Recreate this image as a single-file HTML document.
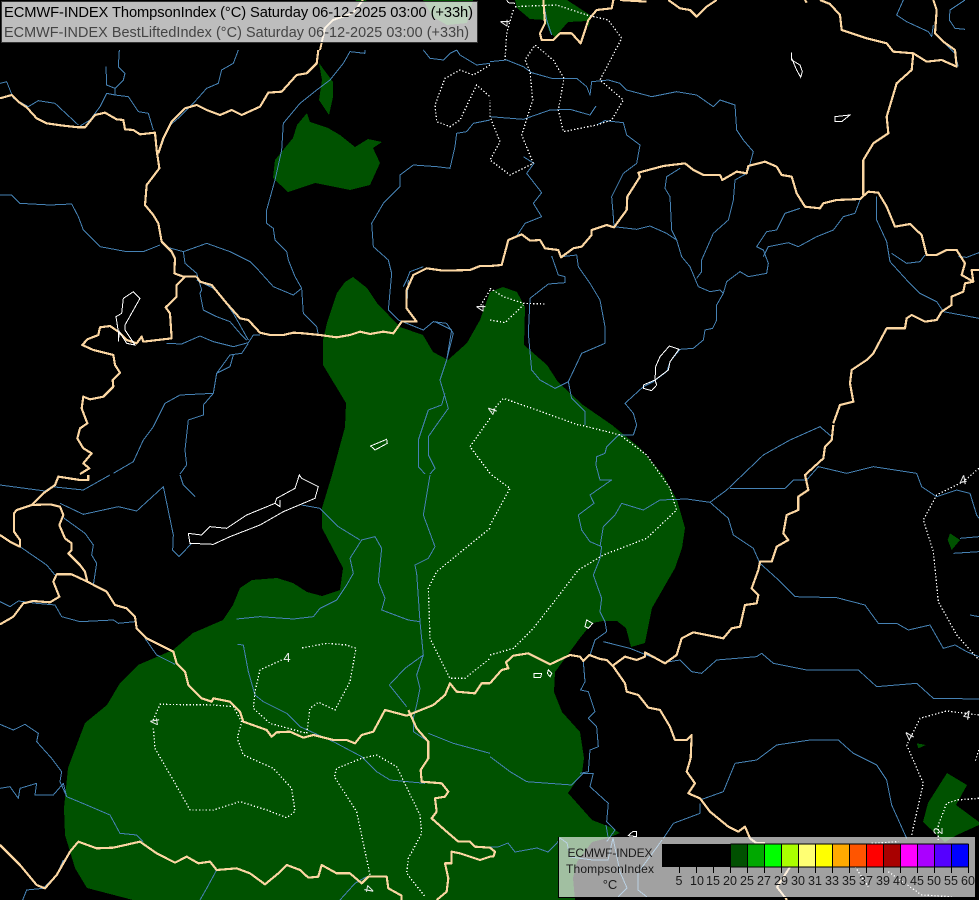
<!DOCTYPE html>
<html><head><meta charset="utf-8"><style>
html,body{margin:0;padding:0;background:#000;width:979px;height:900px;overflow:hidden}
svg{display:block;font-family:"Liberation Sans",sans-serif}
.g{fill:#005200;stroke:none}
.r path{fill:none;stroke:#4682b4;stroke-width:3;stroke-linejoin:round}
.b path{fill:none;stroke:#fbd6a2;stroke-width:6.5;stroke-linejoin:round}
.l path{fill:none;stroke:#fff;stroke-width:3}
.d path{fill:none;stroke:#fff;stroke-width:4;stroke-dasharray:4 6}
</style></head><body>
<svg width="979" height="900" viewBox="0 0 979 900" xmlns="http://www.w3.org/2000/svg">
<rect width="979" height="900" fill="#000"/>
<g shape-rendering="crispEdges">
<path class="g" d="M353,277 367,288 377,303 400,327 423,335 433,352 448,360 467,343 480,320 490,292 503,287 517,292 525,307 524,345 547,365 558,382 583,405 612,425 640,448 663,475 677,500 685,528 682,548 675,568 652,608 645,643 631,647 626,628 617,621 603,621 592,623 580,638 555,672 554,692 562,712 580,732 584,758 582,773 568,793 592,820 610,827 620,833 608,838 592,842 577,862 573,878 575,900 133,900 87,888 75,868 65,835 64,808 68,768 85,723 107,705 120,683 138,665 173,650 193,633 223,620 233,605 240,588 252,580 277,578 293,583 307,592 322,596 340,590 343,568 322,528 322,508 332,475 345,427 346,403 323,365 323,340 327,323 337,293 345,282Z"/>
<path class="g" d="M319,63 333,82 333,97 329,115 319,100 322,80Z"/>
<path class="g" d="M307,113 310,122 328,128 340,135 355,147 368,139 382,142 373,148 380,163 370,185 350,190 315,183 288,192 273,178 275,160 293,138 297,125Z"/>
<path class="g" d="M515,0 517,8 530,19 545,20 550,33 555,37 568,22 587,21 589,28 590,15 567,0Z"/>
<path class="g" d="M423,0 433,17 447,25 467,23 473,0Z M355,0 367,0 363,3 358,3Z"/>
<path class="g" d="M947,773 967,785 956,805 979,822 979,825 957,835 945,842 937,835 923,822 928,803Z"/>
<g transform="translate(490,425) scale(.33333)">
<path class="g" d="M1380,325 1410,345 1385,375 1373,345Z"/>
<path class="g" d="M1280,955 1308,960 1285,970Z"/>
</g>

<!-- rivers -->
<g class="r">
<g transform="translate(0,50) scale(.33333)">
<path d="M358,0 355,50 375,70 370,90 345,115 320,105 318,50"/>
<path d="M345,115 345,135 320,130 300,170 270,210 240,228"/>
<path d="M0,100 20,95 40,145 85,170 115,152 165,160 235,225"/>
<path d="M345,135 385,140 415,185 445,190 460,240"/>
<path d="M715,0 700,40 665,60 655,100 620,115 580,160 540,200 505,230 480,300"/>
<path d="M0,435 35,435 60,460 150,465 215,462 235,500 250,540 300,590 380,605 430,605 480,585"/>
<path d="M495,590 550,605 620,580 690,605 750,635 775,660 820,710 880,735 905,715 910,790 950,830 955,855"/>
<path d="M905,715 885,680 865,630 860,605 825,570 820,535 800,520 800,480 825,390 845,300 850,220 900,160 950,120 990,90 1030,40 1050,5 1095,10 1095,0"/>
<path d="M550,605 555,640 590,670 605,720 600,730 610,780 650,800 690,815 720,850 740,870"/>
<path d="M590,690 650,720 700,790 745,870"/>
<path d="M500,880 545,882 600,858 640,875 700,890 745,878 760,855 780,855"/>
<path d="M745,880 725,910 690,915 650,970 640,1030 540,1035 495,1060 460,1130 430,1170 400,1235 340,1270"/>
<path d="M650,970 690,950 700,915"/>
<path d="M640,1030 610,1065 610,1095 565,1110 555,1200 560,1245 540,1272"/>
<path d="M1470,40 1430,45 1380,15 1370,0 M1270,0 1290,25 1330,30 1350,10 1370,0"/>
<path d="M1470,210 1420,220 1400,245 1370,250 1365,290 1350,355 1310,350 1240,345 1200,375 1200,410 1150,460 1115,520 1120,590 1165,630 1175,670 1165,780 1195,810 1270,840 1300,815 1340,820 1360,850 1340,930 1320,990 1335,1040 1345,1075 1320,1110 1285,1160 1285,1215 1305,1255 1290,1272"/>
<path d="M1335,1030 1325,1065 1285,1080 1255,1170 1255,1250 1275,1272"/>
<path d="M1225,690 1220,775 M1210,710 1220,690 1230,665 1270,650"/>
<path d="M1305,815 1355,840 1340,930"/>
</g>
<g transform="translate(490,0) scale(.33333)">
<path d="M0,185 50,180 100,200 125,218 185,235 260,235 290,260 300,285 305,245 355,240 390,250 410,270 485,290 560,275 620,285 670,320 690,300 735,315 740,390 760,420 790,455 775,510"/>
<path d="M770,520 735,540 730,600 715,660 670,700 635,780 635,815 620,835"/>
<path d="M0,350 100,358 180,330 240,328 300,345 318,318"/>
<path d="M320,375 345,362 400,368 410,405 450,435 440,490 400,520 365,590 370,650 372,680"/>
<path d="M100,470 132,490 110,520 155,578 130,610 155,650 105,670 75,715"/>
<path d="M372,680 440,688 480,678 530,700 560,720"/>
<path d="M570,505 530,530 525,565 540,590 545,690 560,720 575,770 600,800 625,860 660,875 690,870 700,880 710,845 750,815 775,830 830,820 835,790 820,750 800,740 830,695 860,690 885,640 930,625"/>
<path d="M1110,600 1095,640 1060,650 1030,690 980,710 925,740 895,728 835,740 820,770"/>
<path d="M700,880 680,915 680,960 668,985 645,990 640,1020 610,1045 570,1048 540,1085 530,1115 490,1145 460,1160 405,1210 430,1240 440,1275"/>
<path d="M185,768 205,825 225,830 225,848 175,852 120,895 115,1000 125,1110 150,1140 195,1165 235,1145 275,1060 345,1030 345,980 330,900 300,850 265,800 260,765 215,770"/>
<path d="M235,1145 245,1195 285,1235 285,1275"/>
<path d="M1160,590 1160,660 1190,725 1200,785 1250,840 1290,880 1340,905 1360,935 1467,955"/>
<path d="M1205,760 1250,790 1290,785 1305,765"/>
<path d="M1405,770 1430,772 1467,758"/>
<path d="M1240,0 1220,45 1250,65 1315,95 1325,110 1330,75"/>
<path d="M1335,100 1395,160 1405,200"/>
<path d="M1425,0 1380,30 1378,60 1395,85 1425,88"/>
<path d="M160,0 170,60 185,105"/>
</g>
<g transform="translate(0,475) scale(.33333)">
<path d="M0,30 135,48 155,35 250,45 330,0"/>
<path d="M180,85 250,118 355,95 410,108 490,35 520,180 518,225 537,245 575,205"/>
<path d="M540,0 550,30 585,65"/>
<path d="M190,128 255,175 280,210 275,240 290,265 280,330"/>
<path d="M60,215 140,270 165,300"/>
<path d="M0,380 30,395 55,378 110,385 165,390 185,425 240,440 340,435 355,445 405,440"/>
<path d="M435,490 470,540 525,568"/>
<path d="M0,748 40,765 75,748 115,775 110,800 155,850 185,890 180,920 200,965 260,990 330,1020 360,1075 410,1080 430,1100"/>
<path d="M0,940 30,935 55,970 60,940 110,925 105,960 160,960 190,925 200,965"/>
<path d="M710,432 780,425 880,432 940,425 960,400 1010,375 1040,330 1060,295 1050,250 1085,195 1125,185 1145,220 1135,320 1155,370 1145,405 1225,435 1260,440 1270,540 1250,600 1260,640 1250,690 1240,730 1240,770 1285,800"/>
<path d="M1290,0 1270,120 1305,215 1285,250 1245,270 1250,295 1260,440"/>
<path d="M1270,540 1215,580 1168,630 1220,695"/>
<path d="M712,508 730,510 745,590 765,660 790,680 860,715 900,755 1000,800 1085,845 1130,890 1170,915 1275,925"/>
<path d="M1285,775 1360,805 1470,835"/>
<path d="M1100,1205 1065,1225 1020,1275"/>
<path d="M650,1185 620,1240 600,1275"/>
<path d="M190,1155 170,1200 130,1240 80,1245 68,1275"/>
<path d="M905,90 960,100 1015,155 1080,195"/>
</g>
<g transform="translate(490,425) scale(.33333)">
<path d="M440,0 430,30 385,30 350,65 345,85 320,95 318,120 330,165 365,165 350,175 300,210 312,235 265,270 275,315 300,350 335,365 330,400 310,450 335,520 330,560 345,590 350,620 315,645 300,690"/>
<path d="M330,365 340,305 375,270 395,235 460,255 510,225 590,222 660,232 710,195 820,90 900,45 990,5 1025,35"/>
<path d="M720,190 885,190 910,165 950,165 985,125 1070,145 1150,125 1280,145 1295,185 1340,215 1400,195 1440,205 1460,270 1467,280"/>
<path d="M660,232 715,280 730,330 790,370 810,415 860,460 915,515 1040,518 1125,540 1165,595 1220,595 1255,615 1320,600 1360,670 1395,660 1430,680 1467,695"/>
<path d="M340,650 420,670 470,690 525,712 570,705 605,740 635,745 680,705 800,695 815,685 850,715 950,735 1030,735 1105,735 1160,785 1280,775 1330,820 1467,822"/>
<path d="M280,710 285,770 272,795 295,800 315,860 295,880 320,905 325,965 300,975 295,1040 270,1045"/>
<path d="M0,995 60,1040 110,1070 245,1080 280,1045 310,1045 300,1085 355,1135 350,1190 375,1215 350,1250"/>
<path d="M630,1125 700,1100 735,1015 800,1005 860,960 960,945 1045,945 1090,985 1160,1020 1190,1065 1205,1140 1250,1240"/>
<path d="M630,1135 630,1165 550,1195 520,1240"/>
<path d="M1410,340 1467,335 M1390,385 1467,380 M1440,570 1467,575"/>
</g>
<!-- under legend and the river at the bottom centre -->
<path style="stroke-width:1" d="M490,847 498,847 508,843 515,852 537,848 548,852 557,843 560,838 567,843 570,857 593,860 608,860 613,838 620,872 627,888 618,897 M638,873 638,890 647,897 M662,840 657,847 640,870 M608,837 606,825"/>
</g>

<!-- borders -->
<g class="b">
<g transform="translate(0,50) scale(.33333)">
<path d="M0,145 35,135 55,155 80,172 110,205 140,220 190,227 235,232 255,232 285,195 315,188 350,208 370,210 375,238 400,240 420,253 465,248 470,300 478,355 440,405 435,465 460,495 475,520 485,575 515,605 525,625 523,670 550,680 590,680"/>
<path d="M590,680 555,680 530,705 530,740 497,772 510,790 515,865 430,875 425,860 410,880 380,870 355,845 330,828 300,832 295,855 262,868 247,885 280,900 340,915 345,945 360,968 338,990 340,1010 310,1040 270,1048 250,1040 245,1075 262,1120 240,1135 232,1165 250,1195 275,1210 250,1240 268,1255 240,1272"/>
<path d="M590,680 600,695 635,705 680,760 720,805 745,810 780,848 810,855 850,855 880,848 910,850 960,855 1010,862 1050,855 1080,845 1110,852 1150,845 1180,850 1205,815 1250,815 1220,775 1220,720 1240,675 1280,655 1330,662 1410,660 1440,648 1470,648"/>
<path d="M955,0 950,40 920,70 890,75 845,125 805,128 780,170 725,195 695,180 660,195 620,180 590,165 555,175 515,215 490,265 475,310"/>
</g>
<path style="stroke-width:2" d="M320,50 325,28 333,20 353,13 363,0"/>
<g transform="translate(490,0) scale(.33333)">
<path d="M0,798 35,795 55,720 95,703 120,722 150,720 165,745 205,750 213,772 250,745 275,740 305,705 305,690 350,675 372,682 410,630 412,590 450,530 445,518 520,498 585,490 610,510 640,525 690,525 697,540 740,515 770,520 775,498 825,485 860,500 875,525 905,530 920,580 945,620 990,625 1000,610 1040,600 1110,597 1135,575 1165,578 1190,620 1215,680 1260,672 1295,705 1310,765 1340,765 1370,750 1400,750 1425,790 1415,825 1450,845 1425,850 1420,875 1385,890 1385,915 1355,935 1340,960 1305,965 1265,945 1250,955 1245,985 1190,985 1150,1060 1130,1080 1085,1110 1080,1150 1090,1205 1050,1215 1030,1270"/>
<path d="M1120,585 1120,480 1150,430 1195,400 1190,350 1205,300 1220,250 1265,210 1270,160 1210,155 1190,130 1130,115 1055,90 1050,45 1020,12 990,0"/>
<path d="M1270,160 1310,185 1355,180 1400,200 1395,150 1360,125 1335,100 1340,30 1330,0"/>
<path d="M160,0 165,70 150,100 155,120 190,120 210,100 245,100 272,130 295,60 320,30 365,25 370,0"/>
<path d="M535,0 570,25 600,30 620,50 650,20 680,0"/>
<path d="M390,0 470,5 M945,0 950,8"/>
<path d="M1467,810 1445,810 1450,845"/>
</g>
<g transform="translate(0,475) scale(.33333)">
<path d="M265,0 265,15 240,15 175,5 165,30 130,55 95,90 50,105 42,115 42,170 60,195 60,215 30,200 0,180"/>
<path d="M95,90 150,88 180,95 190,120 178,150 195,190 215,205 215,225 205,235 240,270 255,290 262,320 300,340 320,350 345,390 380,400 405,425 410,460 440,490 520,530 530,565 555,590 565,630 605,670 635,680 640,670 690,680 720,710 730,740 800,765 815,785 830,772 870,770 910,788 940,780 1000,795 1040,795 1065,805 1085,780 1120,770 1155,705 1220,722 1300,690 1335,660 1350,625 1370,650 1425,655 1445,625 1470,625"/>
<path d="M1225,705 1250,760 1285,800 1285,850 1262,885 1265,920 1325,925 1345,950 1335,965 1305,970 1310,1010 1295,1030 1340,1070 1375,1100 1410,1100 1425,1115 1470,1118 1485,1130 1480,1145 1470,1145 1440,1155 1380,1135 1355,1130 1355,1165 1335,1165 1345,1210 1340,1250 1310,1275"/>
<path d="M262,320 215,298 170,298 160,320 178,365 150,382 100,378 70,385 40,425 0,448"/>
<path d="M0,1110 60,1170 110,1230 135,1240 170,1200 210,1130 235,1100 290,1120 340,1118 420,1100 470,1135 525,1163 560,1145 595,1165 630,1160 650,1185 710,1180 750,1195 795,1228 835,1195 860,1170 900,1185 925,1208 955,1205 965,1170 1010,1195 1050,1195 1085,1225 1105,1205 1140,1205 1160,1205 1165,1240 1205,1262 1205,1275"/>
</g>
<g transform="translate(490,425) scale(.33333)">
<path d="M0,775 35,735 55,730 48,712 70,692 115,685 180,718 240,690 270,695 280,708 298,690 330,702 350,705 368,722 405,695 440,705 465,695 465,682 525,715 560,690 575,640 610,622 700,640 725,610 750,605 765,540 800,535 805,510 785,490 805,435 810,410 845,410 860,365 895,345 880,325 890,270 925,255 925,215 955,195 945,150 1000,100 1005,65 1025,45 1030,0"/>
<path d="M368,722 405,775 410,800 445,810 475,848 510,855 540,905 555,945 590,945 605,930 602,1000 590,1040 615,1075 595,1105 630,1120 660,1160 715,1205 745,1220 765,1205 780,1240 800,1255 825,1255"/>
</g>
<path style="stroke-width:2" d="M790,867 777,887 787,900"/>
</g>

<!-- lakes -->
<g class="l">
<g transform="translate(0,475) scale(.33333)">
<path d="M565,175 570,205 640,208 690,185 780,150 850,110 945,70 955,35 905,10 898,0 885,40 830,70 825,85 740,120 680,160 630,155 605,180 565,175Z"/>
<path d="M825,85 840,95 840,75"/>
</g>
<g transform="translate(0,50) scale(.33333)">
<path d="M400,725 370,745 365,790 348,800 355,845 355,875 358,845 380,880 405,885 375,840 375,825 420,745Z"/>
<path d="M1112,1188 1160,1168 1162,1180 1125,1200Z"/>
</g>
<g transform="translate(490,0) scale(.33333)">
<path d="M905,158 905,180 930,195 937,215 932,232 920,210 905,175Z"/>
<path d="M1035,350 1080,345 1055,365 1035,365Z"/>
<path d="M538,1038 567,1048 540,1085 535,1110 495,1140 497,1100 510,1070Z"/>
<path d="M495,1140 460,1155 460,1165 485,1172 500,1155Z"/>
<path d="M50,0 55,8 75,10"/>
</g>
<g transform="translate(490,425) scale(.33333)">
<path d="M290,585 308,595 295,610 285,605Z"/>
<path d="M132,745 155,745 152,757 132,757Z"/>
<path d="M175,735 185,745 180,755 172,745Z"/>
<path d="M415,1232 428,1220 440,1220 440,1235Z"/>
</g>
</g>

<!-- contours -->
<g class="d">
<g transform="translate(0,475) scale(.33333)">
<path d="M845,555 780,585 765,650 760,700 810,745 920,775 930,700 955,682 1005,705 1050,620 1068,520 1040,510 980,505 900,520"/>
<path d="M460,760 465,820 545,960 570,1005 640,1005 720,980 800,1005 860,1028 885,1010 875,940 820,880 730,840 712,790 725,740 700,695 640,690 480,688 460,735"/>
<path d="M1110,1200 1070,1010 1003,905 1010,880 1085,850 1130,840 1190,875 1260,1020 1265,1075 1225,1150 1220,1195 1275,1265"/>
<path d="M1470,160 1310,290 1285,340 1290,490 1350,610 1395,610 1470,550"/>
</g>
<g transform="translate(490,425) scale(.33333)">
<path d="M0,690 70,670 130,610 200,520 265,435 340,390 470,340 560,255 540,190 470,90 390,30 270,0"/>
<path d="M5,150 60,190 0,300"/>
<path d="M1467,130 1420,170 1340,210 1300,285 1330,380 1345,530 1400,630 1467,705"/>
<path d="M1467,870 1370,858 1290,880 1250,960 1300,1075 1265,1230"/>
<path d="M1467,975 1455,1010"/>
<path d="M1467,1120 1400,1125 1370,1135 1345,1200 1345,1250"/>
</g>
<g transform="translate(490,0) scale(.33333)">
<path d="M265,1275 140,1230 40,1195 5,1235"/>
<path d="M0,865 40,890 100,910 165,912 M0,960 45,968 100,915"/>
<path d="M75,20 120,18 200,15 290,45 355,60 395,115 330,240 400,300 365,360 320,375 220,395 205,330 222,235 190,180 135,135 105,180 120,215 128,300 95,405 130,490 60,525 0,480 30,425 0,350 0,300"/>
<path d="M70,30 50,100 45,180"/>
</g>
<g transform="translate(0,50) scale(.33333)">
<path d="M1470,45 1420,75 1380,60 1335,85 1305,165 1310,215 1350,230 1380,210 1430,105 1470,140"/>
<path d="M1470,1105 1410,1190 1470,1270"/>
<path d="M1470,720 1440,770"/>
</g>
<g transform="translate(555,830) scale(.33333)">
<path d="M950,40 1030,35 M900,110 940,170 M1000,125 1050,160 1100,195 1190,200"/>
</g>
</g>
</g>

<!-- contour labels -->
<g fill="#eee" font-size="13" text-anchor="middle">
<text transform="translate(287,662)">4</text>
<text transform="translate(155,722) rotate(-100)" dy="4.5">4</text>
<text transform="translate(369,889) rotate(100)" dy="4.5">4</text>
<text transform="translate(492,411) rotate(-70)" dy="4.5">4</text>
<text transform="translate(505,23) rotate(-90)" dy="4.5">4</text>
<text transform="translate(481,308) rotate(-90)" dy="4.5">4</text>
<text transform="translate(963,480) rotate(-10)" dy="4.5">4</text>
<text transform="translate(967,715) rotate(10)" dy="4.5">4</text>
<text transform="translate(909,736) rotate(-60)" dy="4.5">4</text>
<text transform="translate(938,831) rotate(-90)" dy="4.5">2</text>
</g>

<!-- header -->
<rect x="1.5" y="1.5" width="476" height="41" fill="#fff" fill-opacity=".74" stroke="#333" stroke-width="1" shape-rendering="crispEdges"/>
<text x="4" y="17" font-size="14.7" fill="#000" textLength="469" lengthAdjust="spacing">ECMWF-INDEX ThompsonIndex (°C) Saturday 06-12-2025 03:00 (+33h)</text>
<text x="4" y="37" font-size="14.4" fill="#444" textLength="465" lengthAdjust="spacing">ECMWF-INDEX BestLiftedIndex (°C) Saturday 06-12-2025 03:00 (+33h)</text>

<!-- legend -->
<rect x="558" y="837" width="417" height="60" fill="#fff" fill-opacity=".63" shape-rendering="crispEdges"/>
<path d="M558.5,837 V897.5 H975" fill="none" stroke="#000" stroke-width="1" shape-rendering="crispEdges"/>
<g shape-rendering="crispEdges">
<rect x="662" y="844" width="68" height="23" fill="#000"/>
<rect x="730" y="844" width="17" height="23" fill="#005000"/>
<rect x="747" y="844" width="17" height="23" fill="#00a800"/>
<rect x="764" y="844" width="17" height="23" fill="#00ff00"/>
<rect x="781" y="844" width="17" height="23" fill="#aaff00"/>
<rect x="798" y="844" width="17" height="23" fill="#ffff73"/>
<rect x="815" y="844" width="17" height="23" fill="#ffff00"/>
<rect x="832" y="844" width="17" height="23" fill="#ffaa00"/>
<rect x="849" y="844" width="17" height="23" fill="#ff5500"/>
<rect x="866" y="844" width="17" height="23" fill="#ff0000"/>
<rect x="883" y="844" width="17" height="23" fill="#a80000"/>
<rect x="900" y="844" width="17" height="23" fill="#ff00ff"/>
<rect x="917" y="844" width="17" height="23" fill="#aa00ff"/>
<rect x="934" y="844" width="17" height="23" fill="#5500ff"/>
<rect x="951" y="844" width="17" height="23" fill="#0000ff"/>
<path d="M730.5,844V873M747.5,844V873M764.5,844V873M781.5,844V873M798.5,844V873M815.5,844V873M832.5,844V873M849.5,844V873M866.5,844V873M883.5,844V873M900.5,844V873M917.5,844V873M934.5,844V873M951.5,844V873M968.5,844V873M679.5,867V873M696.5,867V873M713.5,867V873M730.5,844H968.5M730.5,867H968.5" stroke="#000" stroke-width="1" fill="none"/>
</g>
<g font-size="12" fill="#1a1a1a" text-anchor="middle">
<text x="610" y="857" textLength="85" lengthAdjust="spacing">ECMWF-INDEX</text>
<text x="610" y="873" textLength="88" lengthAdjust="spacing">ThompsonIndex</text>
<text x="610" y="889" font-size="13">°C</text>
</g>
<g font-size="12.5" fill="#1a1a1a" text-anchor="middle">
<text x="679" y="885">5</text><text x="697" y="885">10</text><text x="713" y="885">15</text><text x="730" y="885">20</text><text x="747" y="885">25</text><text x="764" y="885">27</text><text x="781" y="885">29</text><text x="798" y="885">30</text><text x="815" y="885">31</text><text x="832" y="885">33</text><text x="849" y="885">35</text><text x="866" y="885">37</text><text x="883" y="885">39</text><text x="900" y="885">40</text><text x="917" y="885">45</text><text x="934" y="885">50</text><text x="951" y="885">55</text><text x="968" y="885">60</text>
</g>
</svg>
</body></html>
